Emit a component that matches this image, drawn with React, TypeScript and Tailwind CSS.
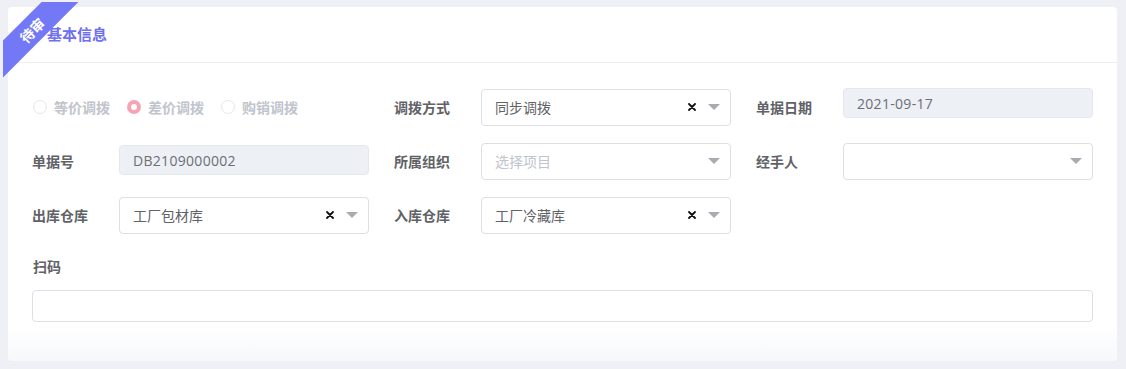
import type { ReactNode } from 'react'

const FONT = "font-['Open_Sans','Noto_Sans_CJK_SC',sans-serif]"

function Caret() {
  return (
    <svg width="12" height="6" viewBox="0 0 12 6" className="shrink-0">
      <path d="M0 0h12L6 6z" fill="#a8abb2" />
    </svg>
  )
}

function Clear() {
  return (
    <svg width="8" height="8" viewBox="0 0 8 8" className="shrink-0">
      <path d="M1 1l6 6M7 1L1 7" stroke="#111" strokeWidth="1.8" strokeLinecap="round" />
    </svg>
  )
}

function Select({ value, placeholder, clearable }: { value?: string; placeholder?: string; clearable?: boolean }) {
  return (
    <div className="flex h-[37px] w-[250px] items-center rounded-[4px] border border-[#dcdfe6] bg-white pl-[13px] pr-[10px]">
      <span className={value ? 'flex-1 text-[14px] text-[#606266]' : 'flex-1 text-[14px] text-[#c0c4cc]'}>
        {value ?? placeholder}
      </span>
      {clearable && (
        <span className="mr-[12px] flex items-center">
          <Clear />
        </span>
      )}
      <Caret />
    </div>
  )
}

function ReadOnly({ value }: { value: string }) {
  return (
    <div className="flex h-[30px] w-[250px] items-center rounded-[4px] border border-[#e4e7ed] bg-[#edf0f5] pl-[13px] text-[14px] tracking-[0.3px] text-[#6b6e75]">
      {value}
    </div>
  )
}

function Field({ label, children }: { label: string; children: ReactNode }) {
  return (
    <div className="flex h-[38px] items-center">
      <span className="w-[87px] shrink-0 text-[14px] font-bold text-[#606266]">{label}</span>
      {children}
    </div>
  )
}

function Radio({ label, checked }: { label: string; checked?: boolean }) {
  return (
    <div className="flex items-center gap-[7px]">
      <span
        className={
          checked
            ? 'h-[14px] w-[14px] rounded-full border-[4px] border-[#f7a3b3] bg-white'
            : 'h-[14px] w-[14px] rounded-full border border-[#e4e7ed] bg-white'
        }
      />
      <span className="text-[14px] font-bold text-[#c0c4cc]">{label}</span>
    </div>
  )
}

export default function App() {
  return (
    <div className={`h-[369px] w-[1126px] bg-[#eff0f5] pl-[8px] pr-[9px] pt-[7px] ${FONT}`}>
      <div className="relative h-[354px] w-full rounded-[4px] bg-[linear-gradient(to_bottom,#ffffff_90%,#f7f8fb)]">
        {/* status ribbon */}
        <div className="absolute -left-[5px] -top-[5px] h-[76px] w-[76px] overflow-hidden">
          <div className="absolute left-[-31px] top-[15px] flex h-[26px] w-[120px] -rotate-45 items-center justify-center bg-[#7378f6] text-[14px] font-bold text-white">
            待审
          </div>
        </div>

        <div className="flex h-[56px] items-center border-b border-[#ebeef5] pl-[39px]">
          <span className="text-[15px] font-bold text-[#6e70f0]">基本信息</span>
        </div>

        <div className="px-[24px] pt-[25px]">
          <div className="grid grid-cols-3 gap-x-[25px] gap-y-[16px]">
            <div className="flex h-[38px] items-center gap-[17px] pl-[1px]">
              <Radio label="等价调拨" />
              <Radio label="差价调拨" checked />
              <Radio label="购销调拨" />
            </div>
            <Field label="调拨方式">
              <Select value="同步调拨" clearable />
            </Field>
            <Field label="单据日期">
              <div className="-mt-[8px]">
                <ReadOnly value="2021-09-17" />
              </div>
            </Field>

            <Field label="单据号">
              <div className="-mt-[2px]">
                <ReadOnly value="DB2109000002" />
              </div>
            </Field>
            <Field label="所属组织">
              <Select placeholder="选择项目" />
            </Field>
            <Field label="经手人">
              <Select />
            </Field>

            <Field label="出库仓库">
              <Select value="工厂包材库" clearable />
            </Field>
            <Field label="入库仓库">
              <Select value="工厂冷藏库" clearable />
            </Field>
            <div />
          </div>

          <div className="mt-[23px] h-[20px] pl-[1px] text-[14px] font-bold leading-[20px] text-[#606266]">扫码</div>
          <div className="mt-[13px] h-[32px] w-full rounded-[4px] border border-[#dcdfe6] bg-white" />
        </div>
      </div>
    </div>
  )
}
